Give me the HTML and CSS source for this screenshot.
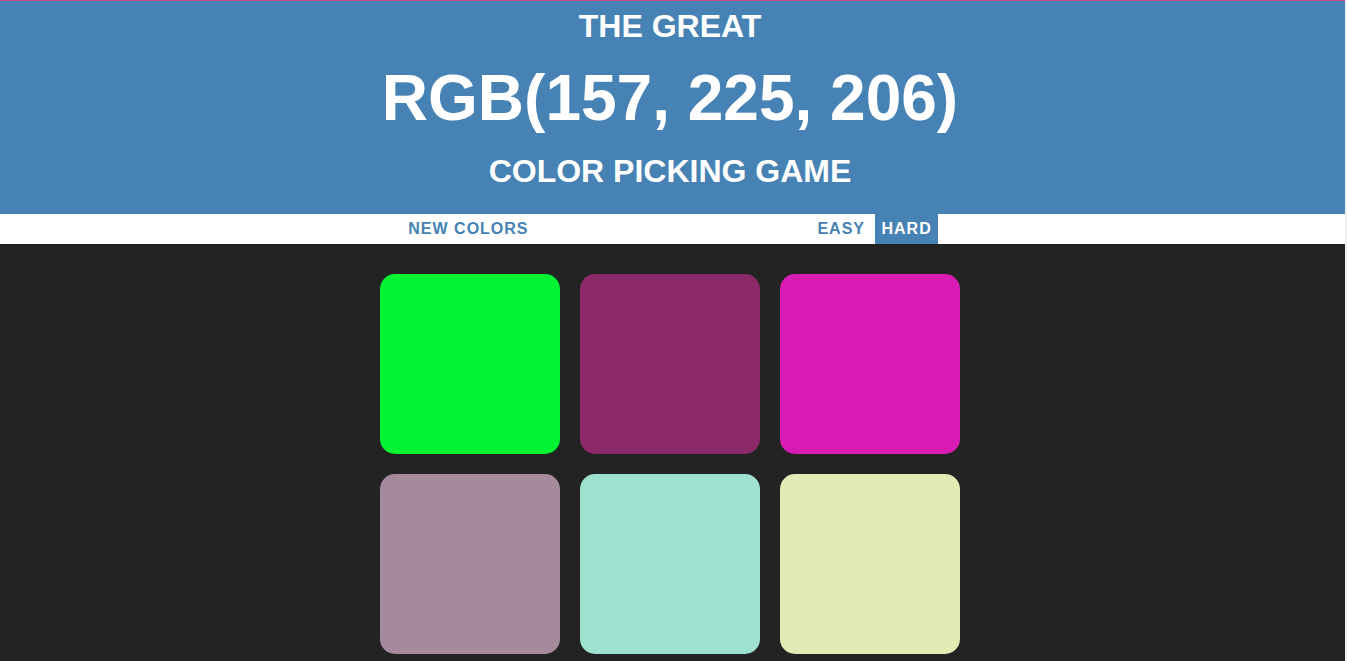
FILE: index.html
```html
<!DOCTYPE html>
<html lang="en">
<head>
<meta charset="utf-8">
<title>Color Game</title>
<link rel="stylesheet" href="styles.css">
</head>
<body>
<div class="page">
  <h1 class="header">
    <span class="line line-top">The Great</span>
    <span class="line line-rgb">RGB(157, 225, 206)</span>
    <span class="line line-bottom">Color Picking Game</span>
  </h1>
  <div class="stripe">
    <button class="btn">New Colors</button>
    <span class="message"></span>
    <button class="btn">Easy</button>
    <button class="btn selected">Hard</button>
  </div>
  <div class="board">
    <div class="container">
      <div class="square sq1"></div>
      <div class="square sq2"></div>
      <div class="square sq3"></div>
      <div class="square sq4"></div>
      <div class="square sq5"></div>
      <div class="square sq6"></div>
    </div>
  </div>
</div>
</body>
</html>
```
FILE: styles.css
```css
html {
  background: #f0f0f0;
}
body {
  margin: 0 2px 0 0;
  background: #232323;
  border-top: 1px solid #c84b82;
  font-family: "Liberation Sans", Arial, sans-serif;
  min-height: 660px;
}
.header {
  margin: 0;
  padding: 7px 5px 24px 0;
  background: #4682b4;
  color: #ffffff;
  text-align: center;
  text-transform: uppercase;
  font-weight: 700;
  font-size: 32px;
}
.line {
  display: block;
}
.line-top {
  line-height: 36px;
}
.line-rgb {
  font-size: 64px;
  line-height: 108px;
}
.line-bottom {
  line-height: 38px;
}
.stripe {
  height: 30px;
  padding-right: 5px;
  background: #ffffff;
  text-align: center;
}
.btn {
  border: none;
  background: none;
  height: 100%;
  padding: 1px 6px;
  margin: 0;
  font: 700 16px "Liberation Sans", Arial, sans-serif;
  letter-spacing: 1px;
  text-transform: uppercase;
  color: #4682b4;
  vertical-align: top;
}
.btn.selected {
  background: #4682b4;
  color: #ffffff;
}
.message {
  display: inline-block;
  width: 20%;
}
.board {
  padding-right: 5px;
}
.container {
  width: 600px;
  margin: 20px auto 0;
  padding: 10px;
  box-sizing: border-box;
  display: grid;
  grid-template-columns: repeat(3, 180px);
  gap: 20px;
}
.square {
  width: 180px;
  height: 180px;
  border-radius: 15px;
}
.sq1 { background: #03f232; }
.sq2 { background: #8c2a69; }
.sq3 { background: #d81bb3; }
.sq4 { background: #a58a9c; }
.sq5 { background: #9de1ce; }
.sq6 { background: #e1ebb6; }
```
